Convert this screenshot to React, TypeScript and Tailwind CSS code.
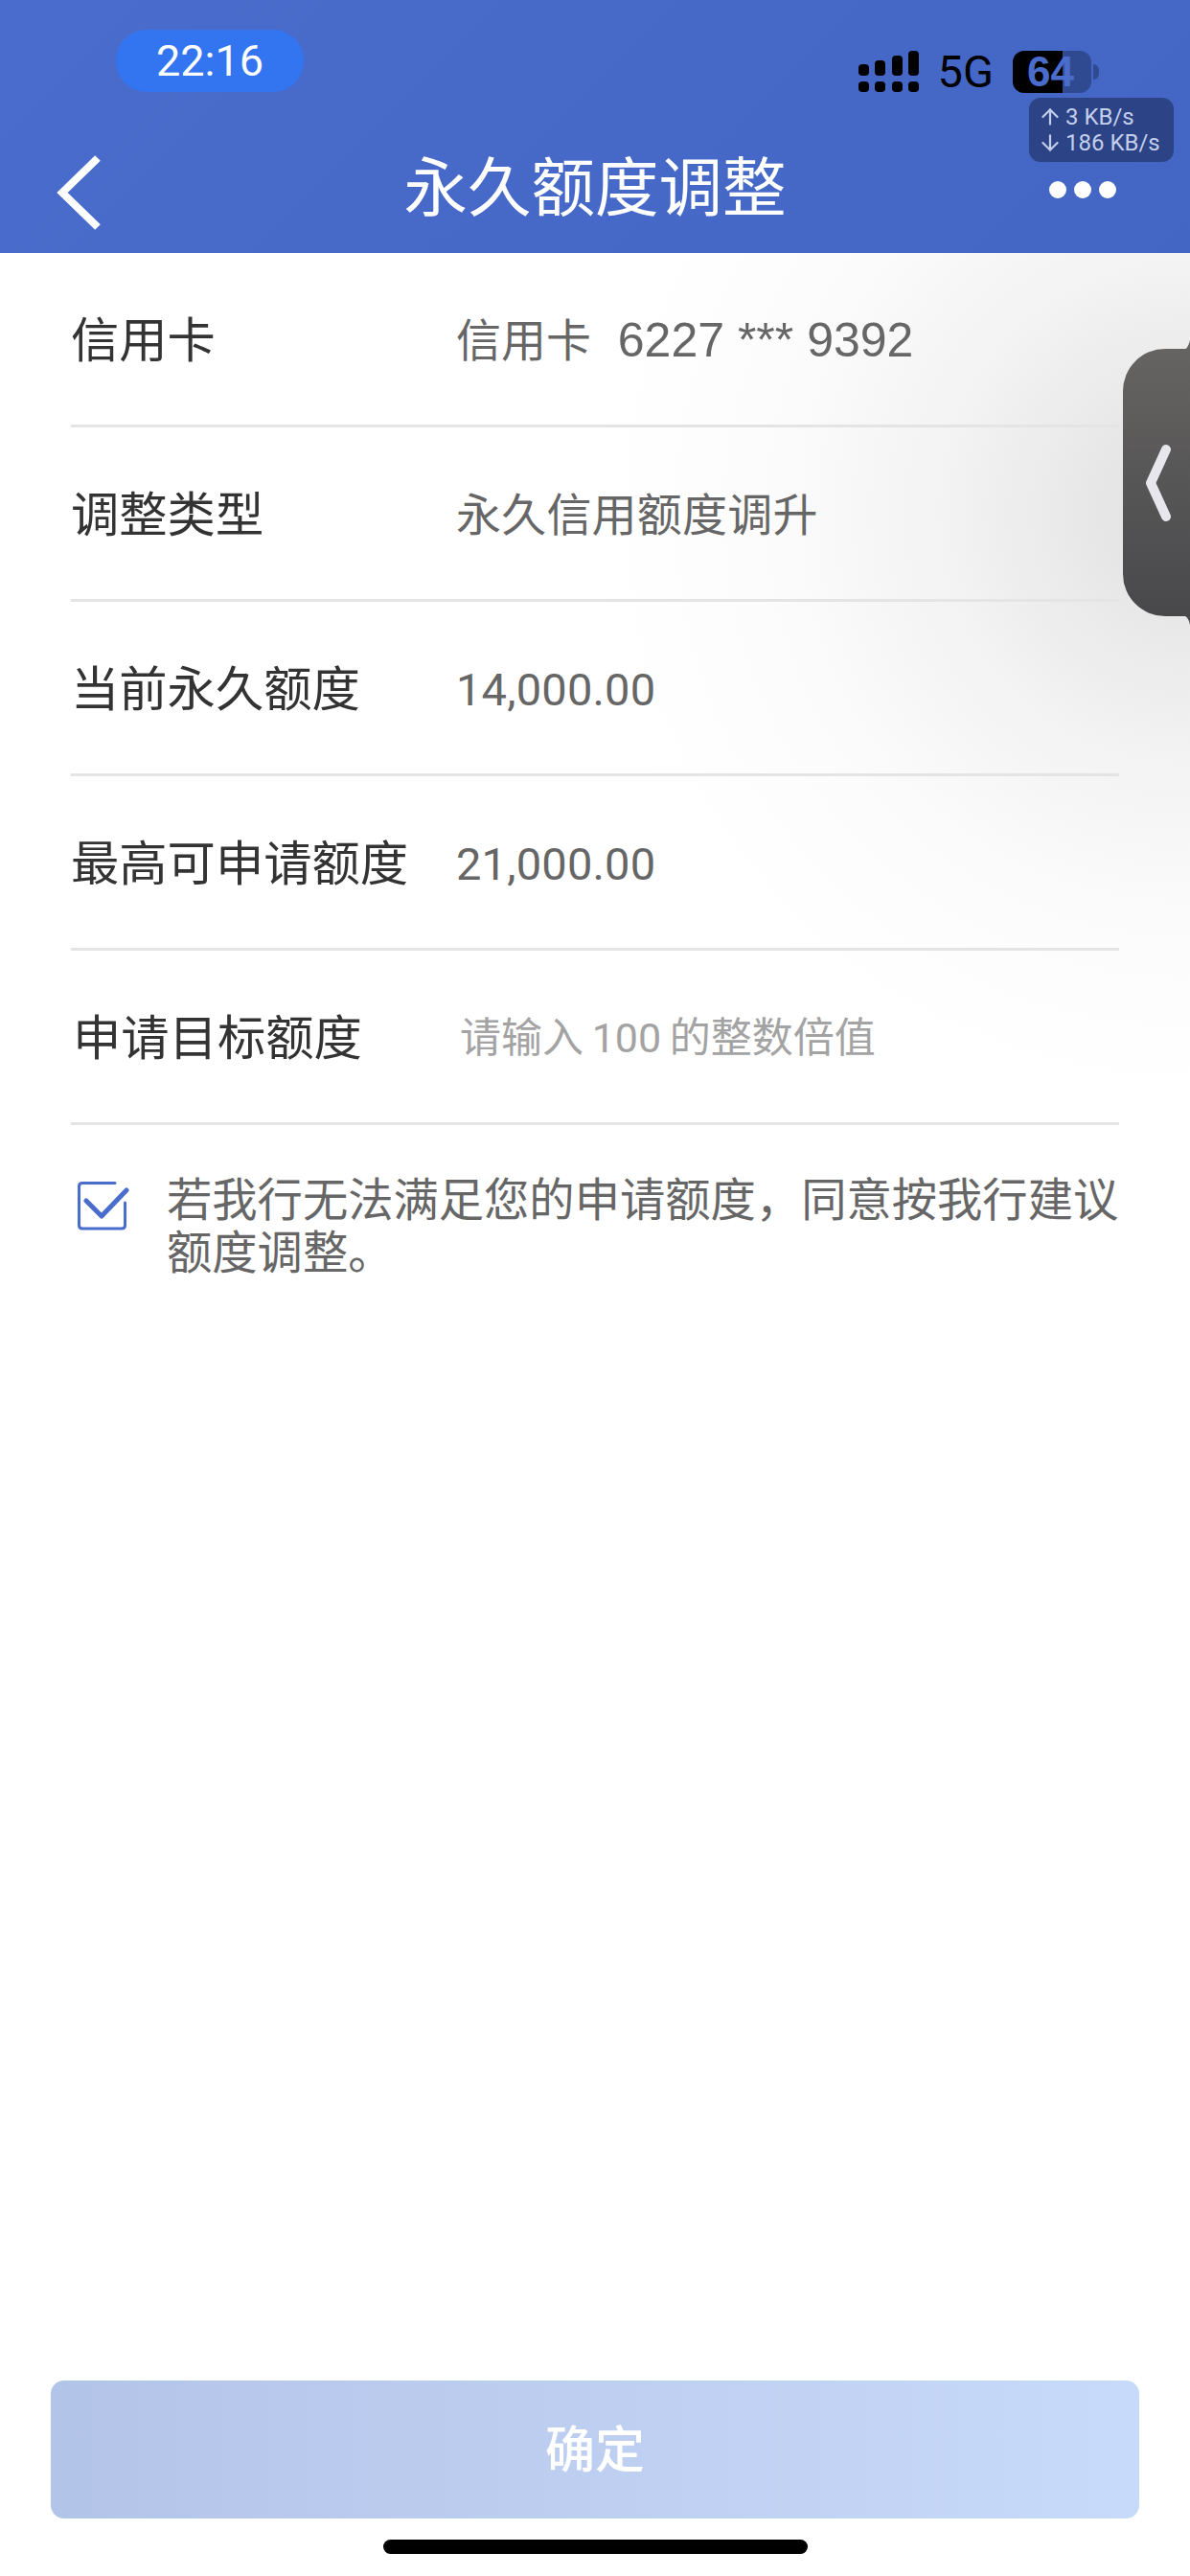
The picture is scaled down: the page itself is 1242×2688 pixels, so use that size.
import type { ReactNode } from "react";
import { ArrowUp, ArrowDown } from "lucide-react";

const FONT = "font-['Roboto','Noto_Sans_CJK_SC',sans-serif]";

function Row({ label, value, valueClass = "text-[47px] text-[#666666] tracking-[0.2px]", labelClass = "" }: { label: string; value: ReactNode; valueClass?: string; labelClass?: string }) {
  return (
    <div className="flex h-[182px] items-center border-b-[3px] border-[#e4e4e4] pt-[3px]">
      <div className={`w-[402px] shrink-0 pt-[2px] text-[50.3px] leading-none text-[#333333] ${labelClass}`}>{label}</div>
      <div className={`leading-none whitespace-pre ${valueClass}`}>{value}</div>
    </div>
  );
}

function Signal() {
  return (
    <svg width="63" height="43" viewBox="0 0 63 43" fill="#000">
      <rect x="0" y="14" width="11" height="12" rx="4" />
      <rect x="17" y="10" width="11" height="16" rx="4" />
      <rect x="35" y="5" width="11" height="21" rx="4" />
      <rect x="52" y="0" width="11" height="26" rx="4" />
      <rect x="0" y="32" width="11" height="11" rx="4" />
      <rect x="17" y="32" width="11" height="11" rx="4" />
      <rect x="35" y="32" width="11" height="11" rx="4" />
      <rect x="52" y="32" width="11" height="11" rx="4" />
    </svg>
  );
}

function Battery() {
  return (
    <div className="relative h-[44px] w-[82px] rounded-[12px] bg-[#2f4a90]">
      <div className="h-full w-[52px] rounded-l-[12px] bg-black" />
      <div className="absolute inset-0 flex items-center pl-[15px] font-['Liberation_Sans',sans-serif] text-[44px] font-bold leading-none text-[#4a6dcc]">64</div>
    </div>
  );
}

export default function App() {
  return (
    <div className={`relative flex h-[2688px] w-[1242px] flex-col overflow-hidden bg-white ${FONT}`}>
      <header className="relative h-[264px] shrink-0 bg-[linear-gradient(135deg,#4a6dcd,#4366c5)]">
        <div className="flex items-start pl-[121px] pr-[95px] pt-[31px]">
          <div className="flex h-[65px] w-[196px] items-center justify-center rounded-[32px] bg-[#3375f0] text-[45px] leading-none text-white">22:16</div>
          <div className="ml-auto flex items-center pt-[20px]">
            <Signal />
            <span className="ml-[20px] text-[47px] leading-none text-black">5G</span>
            <div className="ml-[20px] flex items-center">
              <Battery />
              <div className="ml-[2px] h-[16px] w-[6px] rounded-r-full bg-[#2f4a90]" />
            </div>
          </div>
        </div>
        <div className="absolute left-[1074px] top-[102px] flex h-[67px] w-[151px] flex-col justify-center rounded-[12px] bg-[#2c4385] pl-[9px] text-[24px] leading-[27px] text-[#c3cfec]">
          <span className="flex items-center gap-[3px]"><ArrowUp size={26} strokeWidth={2} />3 KB/s</span>
          <span className="flex items-center gap-[3px]"><ArrowDown size={26} strokeWidth={2} />186 KB/s</span>
        </div>
        <div className="absolute inset-x-0 top-[162px] grid h-[78px] grid-cols-[1fr_auto_1fr] items-center px-[59px]">
          <svg width="46" height="78" viewBox="0 0 46 78" fill="none" stroke="#fff" strokeWidth="8">
            <path d="M43 3 L6 39 L43 75" />
          </svg>
          <h1 className="mb-[8px] text-[66.5px] font-normal leading-none text-white">永久额度调整</h1>
          <div className="mr-[18px] mb-[6px] flex justify-end gap-[8px]">
            <span className="h-[18px] w-[18px] rounded-full bg-white" />
            <span className="h-[18px] w-[18px] rounded-full bg-white" />
            <span className="h-[18px] w-[18px] rounded-full bg-white" />
          </div>
        </div>
      </header>

      <main className="relative flex flex-1 flex-col bg-[radial-gradient(circle_620px_at_100%_270px,#e0e0e0_0%,#e7e7e7_16%,#f3f3f3_42%,#fcfcfc_72%,#ffffff_100%)] bg-no-repeat px-[74px]">
        <Row label="信用卡" value={<>信用卡<span className="font-['Liberation_Sans',sans-serif] text-[50px]">  6227 *** 9392</span></>} valueClass="text-[47px] text-[#666666]" />
        <Row label="调整类型" value="永久信用额度调升" />
        <Row label="当前永久额度" value="14,000.00" />
        <Row label="最高可申请额度" value="21,000.00" />
        <Row label="申请目标额度" value="请输入 100 的整数倍值" labelClass="pl-[2px]" valueClass="pl-[4px] text-[43px] text-[#a3a3a3] [word-spacing:-2px]" />

        <div className="mt-[52px] flex items-start">
          <svg className="mt-[4px] shrink-0" width="62" height="56" viewBox="0 0 62 56" fill="none" strokeLinecap="round" strokeLinejoin="round">
            <path d="M46 4.5 H12 Q8.5 4.5 8.5 8 V48.5 Q8.5 52 12 52 H53 Q56.5 52 56.5 48.5 V25" stroke="#4a6dcd" strokeWidth="3" />
            <path d="M16 23 L32 39 L58 12" stroke="#4a6dcd" strokeWidth="5" />
          </svg>
          <p className="ml-[38px] mr-[-10px] text-[47.3px] leading-[55px] text-[#666666]">若我行无法满足您的申请额度，同意按我行建议额度调整。</p>
        </div>

        <div className="mx-[-21px] mt-auto mb-[60px] flex h-[144px] items-center justify-center rounded-[14px] bg-[linear-gradient(90deg,#b3c4e9,#c8daf9)] pt-[4px] text-[52px] font-medium leading-none text-white">确定</div>

        <div className="absolute bottom-[23px] left-[400px] h-[15px] w-[443px] rounded-full bg-black" />
      </main>

      <div className="absolute left-[1172px] top-[364px] flex h-[279px] w-[70px] items-center rounded-l-[44px] bg-[linear-gradient(180deg,#666462,#48484b)]">
        <svg className="absolute right-0 top-[-9px]" width="8" height="10" viewBox="0 0 8 10" fill="#666462"><path d="M8 0 V10 H0 Q6 10 8 0 Z" /></svg>
        <svg className="absolute bottom-[-9px] right-0" width="8" height="10" viewBox="0 0 8 10" fill="#48484b"><path d="M8 10 V0 H0 Q6 0 8 10 Z" /></svg>
        <svg className="ml-[22px]" width="30" height="82" viewBox="0 0 30 82" fill="none" stroke="#e6e6ec" strokeWidth="10" strokeLinecap="round" strokeLinejoin="round">
          <path d="M23 6 L7 41 L23 76" />
        </svg>
      </div>
    </div>
  );
}
